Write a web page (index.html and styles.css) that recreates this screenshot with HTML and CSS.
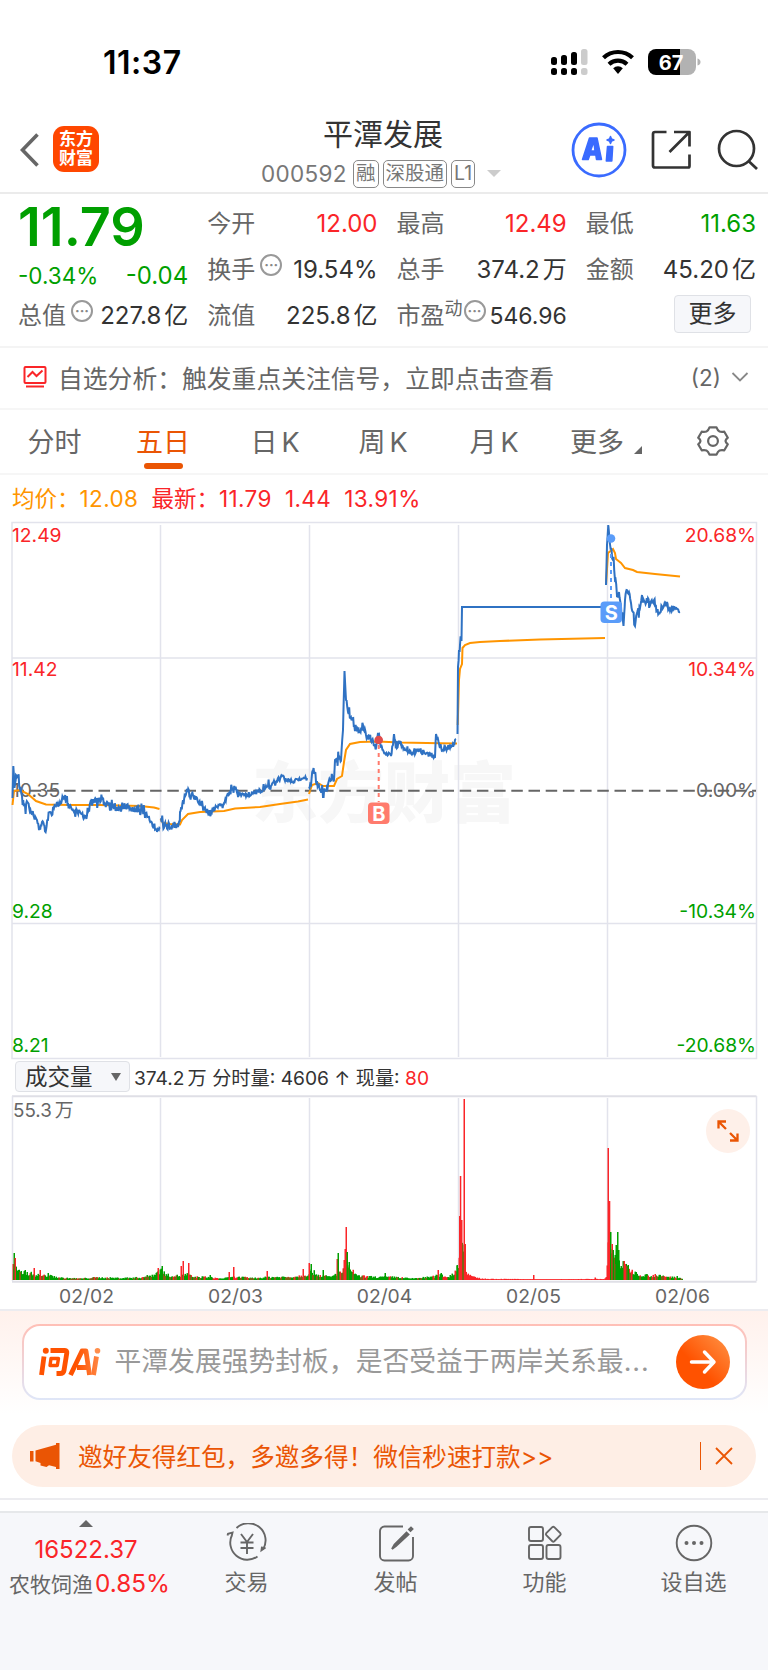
FILE: index.html
```html
<!DOCTYPE html>
<html lang="zh-CN">
<head>
    <meta charset="UTF-8">
    <meta name="viewport" content="width=device-width, initial-scale=1.0">
    <title>平潭发展 000592</title>
    <link rel="stylesheet" href="styles.css">
</head>
<body>
    <div class="status-bar">
        <span class="time">11:37</span>
        <svg width="152" height="28" viewBox="0 0 152 28">
            <g fill="#000">
                <rect x="1" y="9" width="6" height="8" rx="2.5"/>
                <rect x="11" y="7" width="6" height="10" rx="2.5"/>
                <rect x="21" y="4" width="6" height="13" rx="2.5"/>
                <rect x="1" y="20" width="6" height="7" rx="2.5"/>
                <rect x="11" y="20" width="6" height="7" rx="2.5"/>
                <rect x="21" y="20" width="6" height="7" rx="2.5"/>
            </g>
            <rect x="31" y="1" width="6.5" height="16" rx="2.5" fill="#ccc"/>
            <rect x="31" y="20" width="6.5" height="7" rx="2.5" fill="#ccc"/>
            <g fill="none" stroke="#000" stroke-width="4.2">
                <path d="M53.5 9.8a21 21 0 0 1 29 0"/>
                <path d="M59 16.2a13.2 13.2 0 0 1 18 0"/>
            </g>
            <path d="M63.2 20.2a7 7 0 0 1 9.6 0L68 26z" fill="#000"/>
            <path d="M106 1h24v26h-24a8 8 0 0 1-8-8V9a8 8 0 0 1 8-8z" fill="#000"/>
            <path d="M130 1h8a8 8 0 0 1 8 8v10a8 8 0 0 1-8 8h-8z" fill="#b2b2b2"/>
            <path d="M147.5 10.5q3 1 3 3.5t-3 3.5z" fill="#b2b2b2"/>
            <text class="battery-text" x="121" y="21.5">67</text>
        </svg>
    </div>

    <header class="header">
        <svg class="back" width="20" height="36" viewBox="0 0 20 36"><path d="M17.5 2.500 2.500 18l15 15.500" fill="none" stroke="#666" stroke-width="3.600"/></svg>
        <div class="logo">东方<br>财富</div>
        <div class="stock">
            <div class="stock-name">平潭发展</div>
            <div class="stock-code">
                <span class="code">000592</span>
                <span class="tag">融</span>
                <span class="tag">深股通</span>
                <span class="tag">L1</span>
                <i class="caret"></i>
            </div>
        </div>
        <div class="actions">
            <svg width="56" height="56" viewBox="0 0 56 56">
                <circle cx="28" cy="28" r="26" fill="#fff" stroke="#3a6bff" stroke-width="2.8"/>
                <g fill="#3a6bff" stroke="#3a6bff" stroke-width="1.5" stroke-linejoin="round">
                    <path fill-rule="evenodd" d="M11.500 37.500 18.500 16h7.500l4.500 21.500h-5l-.7-4.500h-6l-1.600 4.500zM19.500 29h4.500l-.8-6.500h-1.400z"/>
                    <path d="M36.500 24.500h5.200L40.800 39h-5.500z"/>
                    <path d="M39.500 14.500l1 2.500 2.500 1-2.500 1-1 2.500-1-2.500-2.500-1 2.500-1z"/>
                </g>
            </svg>
            <svg class="share" width="42" height="42" viewBox="0 0 42 42" fill="none" stroke="#333" stroke-width="2.7" stroke-linejoin="round">
                <path d="M16.500 3H5a2 2 0 0 0-2 2v31.500a2 2 0 0 0 2 2h33a1.500 1.500 0 0 0 1.500-1.500V25.500M24 3h15.500v14.500M39 3.500 19.500 23"/>
            </svg>
            <svg class="search" width="44" height="44" viewBox="0 0 44 44" fill="none" stroke="#333" stroke-width="2.7">
                <circle cx="20.5" cy="20.5" r="17.5"/><path d="m32.500 33 8.500 8"/>
            </svg>
        </div>
    </header>

    <section class="quote">
        <div class="price-box">
            <div class="price">11.79</div>
            <div class="change"><span>-0.34%</span><span class="amount">-0.04</span></div>
        </div>
        <div class="cell"><span class="name">今开</span><span class="red">12.00</span></div>
        <div class="cell"><span class="name">最高</span><span class="red">12.49</span></div>
        <div class="cell"><span class="name">最低</span><span class="green">11.63</span></div>
        <div class="cell"><span class="name">换手<i class="tip">···</i></span><span>19.54%</span></div>
        <div class="cell"><span class="name">总手</span><span>374.2<b>万</b></span></div>
        <div class="cell"><span class="name">金额</span><span>45.20<b>亿</b></span></div>
        <div class="cell"><span class="name">总值<i class="tip">···</i></span><span>227.8<b>亿</b></span></div>
        <div class="cell"><span class="name">流值</span><span>225.8<b>亿</b></span></div>
        <div class="cell"><span class="name">市盈<small>动</small><i class="tip near">···</i></span><span class="pe">546.96</span></div>
        <button class="more-btn">更多</button>
    </section>

    <section class="analysis">
        <svg width="24" height="22" viewBox="0 0 24 22" fill="none" stroke="#fa2528" stroke-width="2">
            <rect x="1.5" y="1" width="21" height="16" rx="1"/>
            <path d="m4.500 11 5-5 4 4 6-5.500"/><path d="M3 20.500h18"/>
        </svg>
        <span class="analysis-text">自选分析：触发重点关注信号，立即点击查看</span>
        <span class="count">(2)</span>
        <svg width="18" height="12" viewBox="0 0 18 12"><path d="m1.500 2 7.500 7.500L16.500 2" fill="none" stroke="#888" stroke-width="1.8"/></svg>
    </section>

    <nav class="tabs">
        <span class="tab">分时</span>
        <span class="tab active">五日</span>
        <span class="tab">日<em>K</em></span>
        <span class="tab">周<em>K</em></span>
        <span class="tab">月<em>K</em></span>
        <span class="tab more">更多<i></i></span>
        <span class="tab setting">
            <svg width="32" height="32" viewBox="0 0 32 32" fill="none" stroke="#666" stroke-width="2.2" stroke-linejoin="round">
                <path d="M12.500 2.300h7q1.300 3.500 3 4.200 1.800.7 4.800.2l3.500 6q-2.300 2-2.300 3.300t2.300 3.300l-3.500 6q-3-.5-4.800.2-1.700.7-3 4.200h-7q-1.300-3.500-3-4.200-1.800-.7-4.800-.2l-3.500-6q2.300-2 2.300-3.300t-2.300-3.300l3.500-6q3 .5 4.800-.2 1.700-.7 3-4.200z"/>
                <circle cx="16" cy="16" r="4.9"/>
            </svg>
        </span>
    </nav>

    <div class="legend">
        <span class="orange">均价：<b>12.08</b></span>
        <span>最新：<b>11.79</b></span>
        <b>1.44</b>
        <b>13.91%</b>
    </div>

    <svg class="chart" width="768" height="542" viewBox="0 518 768 542">
        <text class="watermark" x="252" y="817">东方财富</text>
        <g class="grid">
            <path d="M12 522.500H756.500V1058.500H12zM12 658H756M12 923.500H756"/>
            <path d="M160.500 525V1057M309.500 525V1057M458.500 525V1057M607.500 525V1057"/>
        </g>
        <path d="M12.500 790.700H756" stroke="#666" stroke-width="2" stroke-dasharray="11.5 5.7"/>
        <g class="scale">
            <text class="up" x="12" y="541.5">12.49</text>
            <text class="up" x="12" y="676">11.42</text>
            <text x="12" y="797">10.35</text>
            <text class="down" x="12" y="918">9.28</text>
            <text class="down" x="12" y="1052">8.21</text>
        </g>
        <g class="scale right">
            <text class="up" x="756" y="541.5">20.68%</text>
            <text class="up" x="756" y="676">10.34%</text>
            <text x="756" y="797">0.00%</text>
            <text class="down" x="756" y="918">-10.34%</text>
            <text class="down" x="756" y="1052">-20.68%</text>
        </g>
        <g id="avgLines" class="avg-line"></g>
        <g id="priceLines" class="price-line"></g>
        <g class="mark buy">
            <path d="M378.700 745V802" stroke-dasharray="4 4"/>
            <circle cx="378.7" cy="740" r="4.3"/>
            <rect x="368" y="802.5" width="21.5" height="21.5" rx="4"/>
            <text x="378.8" y="820.5">B</text>
        </g>
        <g class="mark sell">
            <path d="M611 554V601" stroke-dasharray="4 4"/>
            <circle cx="611" cy="538.5" r="4.3"/>
            <rect x="600.5" y="601.5" width="21.5" height="21.5" rx="4"/>
            <text x="611.2" y="619.5">S</text>
        </g>
    </svg>

    <div class="volume-head">
        <button class="volume-btn">成交量<i></i></button>
        <span>374.2<span class="unit">万</span> 分时量: 4606 ↑ 现量: <span class="red">80</span></span>
    </div>

    <div class="volume-box">
        <svg class="chart" width="768" height="190" viewBox="0 1093 768 190">
            <path d="M12 1096.300H756.500M12 1281.700H756.500" stroke="#dfdfe6" stroke-width="2"/>
            <g class="grid"><path d="M12.500 1096V1281M756.500 1096V1281M160.500 1098V1279M309.500 1098V1279M458.500 1098V1279M607.500 1098V1279"/></g>
            <g id="volumeBars"></g>
            <text class="volume-max" x="13" y="1117">55.3<tspan dx="3">万</tspan></text>
        </svg>
        <button class="expand">
            <svg width="24" height="24" viewBox="0 0 24 24" fill="none" stroke="#ea5504" stroke-width="2.3">
                <path d="M2.500 9.500V2.500h7.500M3 3 10 10M21.500 14.500v7H14M21 21 14 14"/>
            </svg>
        </button>
    </div>
    <div class="dates"><span>02/02</span><span>02/03</span><span>02/04</span><span>02/05</span><span>02/06</span></div>

    <section class="ask">
        <div class="ask-box">
            <svg width="62" height="30" viewBox="0 0 62 30">
                <defs>
                    <linearGradient id="askFill" gradientUnits="userSpaceOnUse" x1="0" y1="0" x2="62" y2="0"><stop offset=".6" stop-color="#ff5200"/><stop offset="1" stop-color="#ff8a48"/></linearGradient>
                </defs>
                <g fill="none" stroke="url(#askFill)" stroke-width="4.8" stroke-linejoin="round">
                    <path d="M5 9.500 2.500 28M11.500 3.500H26q2.200 0 1.800 2.500L25 23.500q-.5 3-4 3H17.500"/>
                    <path d="M12 11.500h7.500l-1.200 7H11z" stroke-width="3.4"/>
                    <path d="M31.500 28 43 4h4l3.500 24M38 20.500h11"/>
                    <path d="M57.500 9.500 54.500 28"/>
                </g>
                <circle cx="6.800" cy="3.800" r="3" fill="#ff5200"/>
                <circle cx="58.500" cy="3.800" r="2.800" fill="#ff8e4c"/>
            </svg>
            <span class="ask-text">平潭发展强势封板，是否受益于两岸关系最<em>...</em></span>
            <button class="ask-btn">
                <svg width="28" height="26" viewBox="0 0 28 26" fill="none" stroke="#fff" stroke-width="3.5" stroke-linecap="round" stroke-linejoin="round"><path d="M2.500 13h22M15.500 3l9.500 10-9.500 10"/></svg>
            </button>
        </div>
    </section>

    <section class="banner">
        <svg width="31" height="26" viewBox="0 0 31 26" fill="#ea5504"><path d="M0 8h3.500v10.500H0zM5.500 7.500 26 1.800V0h3.500v26H26v-2l-7-1.800-2.500 1.800-6-1.500V20l-5-1.800z"/></svg>
        <span class="banner-text">邀好友得红包，多邀多得！微信秒速打款&gt;&gt;</span>
        <svg class="close" width="18" height="18" viewBox="0 0 18 18"><path d="m1 1 16 16m0-16-16 16" stroke="#ea5504" stroke-width="1.8"/></svg>
    </section>

    <footer class="bottom-nav">
        <div class="index">
            <i></i>
            <div class="index-value">16522.37</div>
            <div class="index-name">农牧饲渔<b>0.85%</b></div>
        </div>
        <div class="item">
            <svg width="42" height="40" viewBox="0 0 42 40">
                <path d="M10.500 5a17.200 17.200 0 0 1 26.500 21.500M39.500 24.500l-4 2.700.5-3.500M31.500 33.500A17.200 17.200 0 0 1 6 12M1.500 12.500l.5-1.600 4.500-1.200-1 4"/>
                <path d="m15 11 6 8 6-8M14.500 19.500h13M14.500 25h13M21 19v12"/>
            </svg>
            <span>交易</span>
        </div>
        <div class="item">
            <svg width="42" height="40" viewBox="0 0 42 40">
                <path d="M28 3.500H9.500a4.500 4.500 0 0 0-4.500 4.500v25a4.500 4.500 0 0 0 4.500 4.500h24a4.500 4.500 0 0 0 4.500-4.500V14"/>
                <path d="m17 26 2.500-4.500L31.500 9.500l2 2-12.500 11.500zM34 6.500l2-2 1.500 1.500-2 2z" fill="#666"/>
            </svg>
            <span>发帖</span>
        </div>
        <div class="item">
            <svg width="42" height="40" viewBox="0 0 42 40">
                <rect x="5" y="4" width="14" height="14" rx="2"/>
                <rect x="5" y="22" width="14" height="14" rx="2"/>
                <rect x="22.5" y="22" width="14" height="14" rx="2"/>
                <path d="m28.300 4.200-6 6a1.500 1.500 0 0 0 0 2l6 6a1.500 1.500 0 0 0 2 0l6-6a1.500 1.500 0 0 0 0-2l-6-6a1.500 1.500 0 0 0-2 0z"/>
            </svg>
            <span>功能</span>
        </div>
        <div class="item">
            <svg width="42" height="40" viewBox="0 0 42 40">
                <circle cx="21" cy="20" r="17.3"/>
                <g fill="#666" stroke="none"><circle cx="13.5" cy="20" r="2"/><circle cx="21" cy="20" r="2"/><circle cx="28.5" cy="20" r="2"/></g>
            </svg>
            <span>设自选</span>
        </div>
    </footer>

    <script>
        // x, y, jitter
        const priceDays = [
            [[12.5,798,0],[13.3,766,3],[14.5,788,7],[16,775,7],[18,776,7],[20,789,6],[22,796,7],[25,806,7],[28,803,5],[31,813,3],[34,817,3],[37,820,4],[39,830,7],[42,822,6],[46,830,6],[48,820,6],[50,812,5],[54,808,3],[60,802,4],[64,796,5],[68,803,3],[74,812,3],[80,812,3],[84,818,4],[88,812,3],[91,803,5],[96,800,5],[104,802,5],[112,803,5],[118,810,3],[124,806,4],[130,808,4],[136,812,4],[142,809,6],[146,815,3],[152,823,3],[157,832,4],[160,828,1]],
            [[161,818,4],[164,828,5],[168,826,6],[172,825,4],[178,827,3],[180,812,8],[184,800,7],[187,789,7],[190,797,6],[194,796,5],[199,802,3],[206,810,3],[209,814,5],[216,807,3],[224,803,3],[230,791,4],[235,789,5],[240,794,2],[247,796,2],[254,793,2],[260,790,4],[268,786,4],[276,782,3],[282,776,4],[287,781,2],[292,782,2],[297,779,3],[307,778,2]],
            [[309,787,4],[311,785,5],[313,770,6],[317,781,5],[321,792,7],[323,797,6],[327,787,5],[330,780,4],[334,780,4],[335,760,5],[337,758,5],[341,761,5],[343,730,4],[344.5,671,0],[346,700,2],[348,712,4],[352,719,6],[356,727,5],[360,731,4],[363,725,6],[366,735,4],[372,740,3],[376,748,3],[378,733,3],[380,741,4],[383,750,3],[387,754,3],[391,756,3],[393,745,3],[394,734,4],[397,748,4],[401,743,5],[405,750,3],[412,752,5],[420,751,3],[428,753,2],[435,757,3],[436,734,2],[440,748,4],[447,749,3],[452,746,2],[456,739,2]],
            [[457.5,734,0],[458,667,2],[459,650,8],[460,645,10],[461.5,640,10],[462,607,0],[605.5,607,0]],
            [[606,585,0],[607,545,2],[608.3,525,1],[609.5,540,4],[611,548,5],[613,560,6],[615,580,8],[617,596,6],[619,592,6],[621,606,6],[623.5,626,3],[625,600,4],[626.5,590,4],[629,592,5],[631,603,4],[633,612,6],[635,626,4],[637,613,6],[640,608,6],[642,595,5],[645,602,5],[650,601,5],[654,600,5],[657,611,4],[659,613,3],[663,608,3],[667,602,4],[670,611,3],[674,607,3],[677,609,2],[680,612,1]]
        ];
        const avgDays = [
            [[12.5,805],[14,791],[20,790],[28,794],[36,801],[46,804.5],[70,805],[100,805],[140,806],[154,807.5],[159.5,809]],
            [[160.5,819],[163,823],[170,824],[180,824.5],[182,820],[188,814],[200,812],[224,811],[235,808.5],[260,807],[280,804],[298,801.5],[308,799.5]],
            [[309,794],[312,785],[318,783],[323,786],[334,786],[337,779],[342,776],[344,762],[346,750],[350,744],[360,742],[378,741.5],[400,742.5],[440,743.2],[457,743.5]],
            [[457.7,725],[459,680],[460,669],[462,664],[462.5,648],[465,645],[470,643],[480,642],[500,641],[540,639.5],[605,638]],
            [[606,585],[608,553],[613,549],[615,553],[616,559],[621,563],[625,568],[633,570],[637,572],[655,574],[680,576.5]]
        ];

        // x, base height of the minute bars
        const volumeBase = [[13,14],[18,8],[28,7],[36,5],[50,4],[62,2],[80,1.5],[95,2.5],[120,2],[140,2.5],[152,5],[160,10],[166,5],[180,4],[187,6],[192,3],[205,3],[220,1.5],[235,3],[255,2],[270,3],[290,3],[305,5],[311,9],[318,5],[330,3],[340,8],[344,10],[350,12],[356,4],[375,3],[395,3],[410,1.5],[430,3],[440,5],[448,3],[456,10],[458,22],[460,44],[464,34],[466,6],[474,2.5],[482,1.2],[540,.6],[604,1],[606,6],[608,40],[612,24],[618,20],[622,15],[628,12],[634,7],[644,5],[660,4],[681,2]];
        const volumeSpikes = [[14,27,'g'],[15,22,'r'],[25,10,'g'],[34,12,'r'],[40,10,'r'],[48,7,'g'],[158,12,'r'],[162,14,'g'],[181,14,'r'],[183,19,'r'],[188.5,17,'r'],[210,5,'g'],[229,8,'r'],[233.5,13,'r'],[267,9,'r'],[303,11,'r'],[309,17,'r'],[311,16,'g'],[323,10,'g'],[337,21,'r'],[338,27,'g'],[344,20,'r'],[345,31,'r'],[346,53,'r'],[347,28,'g'],[349,18,'g'],[385,7,'g'],[438,10,'r'],[441,7,'g'],[457,15,'g'],[459.5,64,'r'],[460.3,104,'r'],[461.5,60,'r'],[464,181,'r'],[465,36,'r'],[533.5,5,'r'],[595,2.5,'r'],[608,132,'r'],[609.3,79,'r'],[610.5,48,'g'],[612,36,'r'],[613,30,'g'],[616,35,'g'],[617.5,48,'g'],[618.5,30,'g'],[624,19,'r'],[625,16,'r'],[628,15,'g'],[636,8,'g'],[655,6,'r'],[677,4,'g']];

        let seed = 7;
        function rand() {
            seed = (seed * 16807) % 2147483647;
            return seed / 2147483647;
        }

        function valueAt(points, x, i) {
            let k = 0;
            while (k < points.length - 2 && points[k + 1][0] < x) k++;
            const a = points[k], b = points[k + 1];
            return a[i] + (b[i] - a[i]) * (x - a[0]) / (b[0] - a[0]);
        }

        function addLine(group, points) {
            const line = document.createElementNS('http://www.w3.org/2000/svg', 'polyline');
            line.setAttribute('points', points.map(p => p[0].toFixed(1) + ',' + p[1].toFixed(1)).join(' '));
            document.getElementById(group).appendChild(line);
        }

        avgDays.forEach(day => addLine('avgLines', day));

        priceDays.forEach(day => {
            const points = [];
            day.forEach((p, k) => {
                points.push([p[0], p[1]]);
                if (!day[k + 1]) return;
                for (let x = p[0] + .6; x < day[k + 1][0] - .2; x += .6) {
                    const amp = valueAt(day, x, 2);
                    const wide = rand() > .8 ? 1.6 : .75;
                    points.push([x, valueAt(day, x, 1) + (rand() * 2 - 1) * amp * wide]);
                }
            });
            addLine('priceLines', points);
        });

        function addBar(x, height, color) {
            const bar = document.createElementNS('http://www.w3.org/2000/svg', 'rect');
            bar.setAttribute('x', x);
            bar.setAttribute('y', 1280 - height);
            bar.setAttribute('width', 1.5);
            bar.setAttribute('height', height);
            bar.setAttribute('fill', color === 'g' ? '#009f00' : '#fa2528');
            document.getElementById('volumeBars').appendChild(bar);
        }

        for (let x = 12.5; x < 682; x += 1) {
            const height = valueAt(volumeBase, x, 1);
            const limitUp = x > 464 && x < 609;
            addBar(x, Math.max(limitUp ? .8 : 1.2, height * (.6 + rand() * .7)), limitUp || rand() > .72 ? 'r' : 'g');
        }
        volumeSpikes.forEach(s => addBar(s[0] - .5, s[1], s[2]));
    </script>
</body>
</html>
```
FILE: styles.css
```css
* {
    box-sizing: border-box;
}

body {
    margin: 0;
    width: 768px;
    height: 1670px;
    overflow: hidden;
    background-color: #fff;
    color: #333;
    font-family: Inter, "Noto Sans CJK SC", sans-serif;
    font-weight: 400;
}

svg {
    display: block;
    flex: none;
}

button {
    font-family: inherit;
    padding: 0;
    border: none;
}

i, em {
    font-style: normal;
}

b {
    font-weight: 400;
}

.red {
    color: #fa2528;
}

.green {
    color: #009f00;
}

/* status bar */
.status-bar {
    display: flex;
    justify-content: space-between;
    height: 100px;
    padding: 48px 66px 0 103px;
}

.time {
    font-size: 32px;
    font-weight: 600;
    line-height: 30px;
    letter-spacing: .5px;
    color: #000;
}

.battery-text {
    font-size: 20px;
    font-weight: 700;
    text-anchor: middle;
    fill: #fff;
}

/* header */
.header {
    display: flex;
    align-items: center;
    height: 94px;
    padding: 0 8px 0 20px;
    border-bottom: 2px solid #ebebeb;
}

.back {
    margin-top: 7px;
}

.logo {
    width: 46px;
    height: 46px;
    margin: 6px 0 0 13px;
    padding-top: 4px;
    border-radius: 11px;
    background-color: #ff4700;
    color: #fff;
    font-size: 17px;
    font-weight: 700;
    line-height: 19px;
    text-align: center;
}

.stock {
    flex: 1;
    margin-top: 9px;
    padding-left: 162px;
}

.stock-name {
    width: 120px;
    margin-left: 62px;
    font-size: 30px;
    line-height: 40px;
    white-space: nowrap;
}

.stock-code {
    display: flex;
    align-items: center;
    height: 28px;
    margin-top: 6px;
    color: #777;
}

.code {
    width: 92px;
    font-size: 22.5px;
    letter-spacing: .3px;
}

.tag {
    height: 28px;
    margin-right: 4px;
    padding: 0 2px;
    border: 1.5px solid #888;
    border-radius: 5px;
    font-size: 19.5px;
    line-height: 25px;
    white-space: nowrap;
}

.caret {
    margin-left: 8px;
    border: 7px solid transparent;
    border-top: 7px solid #ccc;
    border-bottom: 0;
}

.actions {
    display: flex;
    align-items: center;
    height: 56px;
    margin-top: 8px;
}

.share {
    margin-left: 23px;
}

.search {
    margin-left: 24px;
}

/* quote */
.quote {
    display: grid;
    grid-template-columns: repeat(4, 1fr);
    grid-template-rows: 46px 46px 46px;
    column-gap: 19px;
    height: 154px;
    padding: 7px 12px 0 18px;
    border-bottom: 2px solid #f4f4f4;
    font-size: 24px;
}

.price-box {
    grid-row: span 2;
    color: #009f00;
}

.price {
    height: 58px;
    font-size: 54px;
    font-weight: 600;
    line-height: 52px;
}

.change {
    display: flex;
    justify-content: space-between;
    font-size: 22.5px;
    line-height: 34px;
}

.amount {
    font-size: 24px;
}

.cell {
    display: flex;
    justify-content: space-between;
    line-height: 46px;
    white-space: nowrap;
}

.cell b {
    margin-left: 3px;
}

.name {
    display: flex;
    color: #666;
}

.name small {
    margin-top: -7px;
    font-size: 18px;
}

.tip {
    width: 22px;
    height: 22px;
    margin: 7px 0 0 5px;
    border: 2px solid #999;
    border-radius: 50%;
    font-size: 14px;
    font-weight: 700;
    line-height: 17px;
    text-align: center;
    color: #888;
}

.tip.near {
    margin-left: 1px;
}

.pe {
    font-size: 23px;
}

.more-btn {
    justify-self: end;
    width: 77px;
    height: 38px;
    margin: 2px 5px 0 0;
    border: 1.5px solid #dfe1e6;
    border-radius: 4px;
    background-color: #f6f7fa;
    color: #333;
    font-size: 24px;
    line-height: 34px;
}

/* analysis row */
.analysis {
    display: flex;
    align-items: center;
    height: 62px;
    padding: 0 19px 2px 23px;
    border-bottom: 2px solid #f6f6f6;
    color: #666;
}

.analysis-text {
    flex: 1;
    padding-left: 11px;
    font-size: 24.8px;
    white-space: nowrap;
}

.count {
    margin-right: 10px;
    font-size: 22.5px;
}

/* tabs */
.tabs {
    display: grid;
    grid-template-columns: 109px 108px 116px 100px 122px 84px 129px;
    justify-items: center;
    align-items: center;
    height: 65px;
    padding-bottom: 2px;
    border-bottom: 2px solid #f6f6f6;
    font-size: 27px;
    color: #666;
}

.tab {
    position: relative;
}

.tab em {
    margin-left: 4px;
}

.tab.active {
    color: #ea5504;
}

.tab.active::after {
    content: "";
    position: absolute;
    left: 8px;
    bottom: -9px;
    width: 39px;
    height: 6px;
    border-radius: 3px;
    background-color: #ea5504;
}

.tab.more i {
    position: absolute;
    right: -18px;
    bottom: 6px;
    border-left: 8px solid transparent;
    border-bottom: 8px solid #666;
}

.tab.setting {
    margin-left: 19px;
}

/* chart */
.legend {
    display: flex;
    gap: 13px;
    height: 43px;
    padding-left: 12px;
    font-size: 22.5px;
    line-height: 48px;
    color: #fa2528;
}

.legend b {
    letter-spacing: .4px;
}

.legend .orange {
    color: #ff9500;
}

.grid path {
    fill: none;
    stroke: #e2e3ec;
    stroke-width: 1.5;
}

.scale {
    font-size: 19.3px;
    fill: #666;
}

.scale.right {
    text-anchor: end;
}

.scale .up {
    fill: #fa2528;
}

.scale .down {
    fill: #009f00;
}

.watermark {
    font-size: 66px;
    font-weight: 900;
    fill: #f7f7f7;
}

.avg-line {
    fill: none;
    stroke: #ff9500;
    stroke-width: 2;
}

.price-line {
    fill: none;
    stroke: #2f72c3;
    stroke-width: 2;
}

.mark path {
    stroke-width: 2;
}

.mark text {
    fill: #fff;
    font-size: 20px;
    font-weight: 700;
    text-anchor: middle;
}

.buy {
    fill: #ff7b6d;
    stroke: #ff7b6d;
}

.buy circle {
    fill: #e04b4b;
}

.sell {
    fill: #5a9cf9;
    stroke: #5a9cf9;
}

.mark rect,
.mark text,
.mark circle {
    stroke: none;
}

/* volume */
.volume-head {
    display: flex;
    align-items: center;
    height: 33px;
    padding-left: 15px;
    font-size: 19.2px;
    white-space: pre;
}

.volume-head .unit {
    margin-left: 3px;
}

.volume-btn {
    display: flex;
    align-items: center;
    width: 115px;
    height: 31px;
    margin-right: 4px;
    padding-left: 9px;
    border: 1.5px solid #dfe1e6;
    border-radius: 4px;
    background-color: #f6f7fa;
    color: #333;
    font-size: 22.5px;
    line-height: 26px;
}

.volume-btn i {
    margin-left: 18px;
    border: 5px solid transparent;
    border-top: 8px solid #666;
    border-bottom: 0;
}

.volume-box {
    position: relative;
    height: 190px;
}

.volume-max {
    font-size: 18.8px;
    fill: #666;
}

.expand {
    position: absolute;
    top: 16px;
    right: 18px;
    width: 44px;
    height: 44px;
    padding-left: 10px;
    border-radius: 50%;
    background-color: #fef0e9;
}

.dates {
    display: grid;
    grid-template-columns: repeat(5, 149px);
    height: 26px;
    padding-left: 12px;
    font-size: 19.3px;
    line-height: 27px;
    text-align: center;
    color: #666;
}

/* ask ai */
.ask {
    height: 116px;
    padding: 13px 21.5px 0;
    border-top: 2px solid #ececf0;
    background: linear-gradient(#fff1ec, #fff 90%);
}

.ask-box {
    display: flex;
    align-items: center;
    height: 76px;
    padding: 0 15px;
    border: 2px solid transparent;
    border-radius: 18px;
    background: linear-gradient(#fff, #fff) padding-box, linear-gradient(#ffbfb6, #dfe6f8) border-box;
}

.ask-text {
    flex: 1;
    padding-left: 14px;
    font-size: 26.8px;
    line-height: 38px;
    margin-top: -2px;
    white-space: nowrap;
    color: #999;
}

.ask-text em {
    letter-spacing: 1px;
}

.ask-btn {
    width: 54px;
    height: 54px;
    padding-left: 13px;
    border-radius: 50%;
    background: linear-gradient(45deg, #ff5200 40%, #ff9548);
}

/* invite banner */
.banner {
    display: flex;
    align-items: center;
    height: 62px;
    margin: 0 12px;
    padding: 0 23px 0 18px;
    border-radius: 31px;
    background-color: #feeee5;
    color: #ea5504;
}

.banner-text {
    flex: 1;
    margin-top: -2px;
    padding-left: 17px;
    font-size: 24.6px;
    white-space: nowrap;
}

.close {
    width: 33px;
    height: 28px;
    padding: 5px 0 5px 14px;
    border-left: 1.5px solid #ea5504;
}

/* bottom nav */
.bottom-nav {
    display: grid;
    grid-template-columns: 172px repeat(4, 149px);
    height: 172px;
    margin-top: 11px;
    border-top: 2px solid #ececf0;
    background: linear-gradient(#fff 11px, #e6e8ea 11px, #e6e8ea 13px, #f6f7fa 13px);
    color: #666;
    text-align: center;
}

.index i {
    display: block;
    width: 0;
    margin: 20px auto 0;
    border: 7px solid transparent;
    border-bottom: 7px solid #666;
    border-top: 0;
}

.index-value {
    margin-top: 6px;
    font-size: 24px;
    line-height: 34px;
    color: #fa2528;
}

.index-name {
    padding-left: 7px;
    font-size: 21px;
    line-height: 32px;
    white-space: nowrap;
}

.index-name b {
    margin-left: 2px;
    font-size: 24.3px;
    color: #fa2528;
}

.item {
    display: flex;
    flex-direction: column;
    align-items: center;
    padding-top: 23px;
    font-size: 22px;
}

.item svg {
    fill: none;
    stroke: #666;
    stroke-width: 1.9;
}

.item span {
    margin-top: 3px;
    line-height: 32px;
}
```
